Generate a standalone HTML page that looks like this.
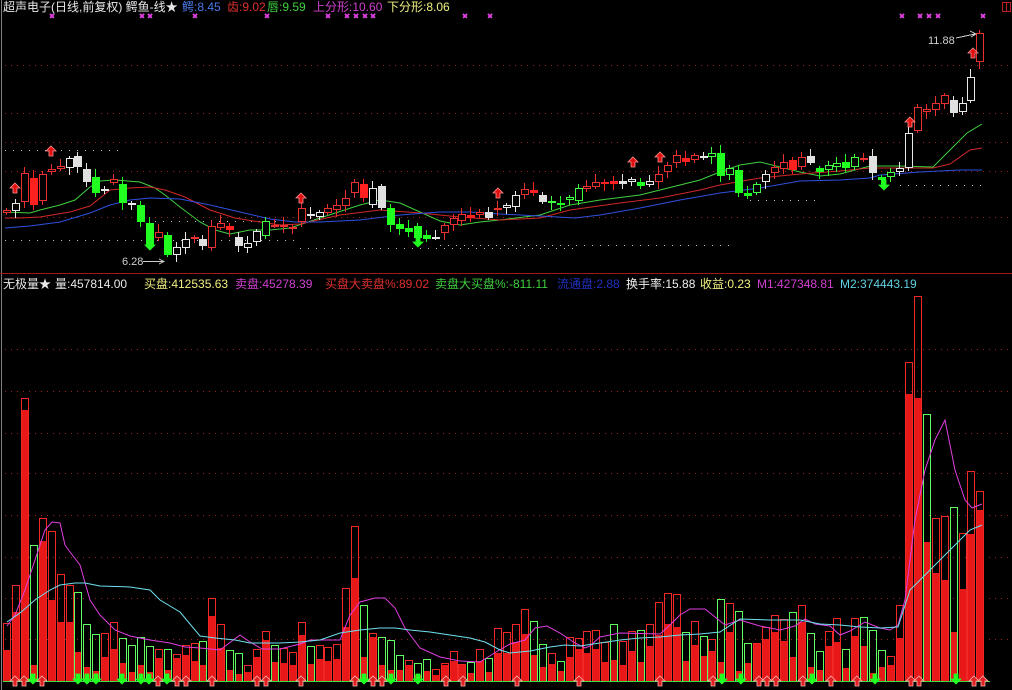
<!DOCTYPE html>
<html><head><meta charset="utf-8"><style>
html,body{margin:0;padding:0;background:#000;width:1012px;height:690px;overflow:hidden;position:relative}
svg{position:absolute;left:0;top:0}
.t{position:absolute;font-family:"Liberation Sans","Noto Sans CJK SC",sans-serif;font-size:12px;line-height:14px;white-space:nowrap}
</style></head><body>
<svg id="s" width="1012" height="690" xmlns="http://www.w3.org/2000/svg" shape-rendering="crispEdges">
<line x1="1.5" y1="0" x2="1.5" y2="690" stroke="#808080" stroke-width="1"/>
<line x1="0" y1="273.5" x2="1012" y2="273.5" stroke="#a01818" stroke-width="1"/>
<rect x="1002.5" y="2.5" width="8" height="9" fill="none" stroke="#c02020"/>
<line x1="1006.5" y1="2" x2="1006.5" y2="11" stroke="#c02020"/>
<g id="g"></g>
<text x="122" y="265" fill="#d0d0d0" font-family="Liberation Sans" font-size="11">6.28</text>
<line x1="143" y1="261.5" x2="163" y2="261.5" stroke="#d0d0d0"/>
<path d="M159 259 L164 261.5 L159 264" fill="none" stroke="#d0d0d0"/>
<text x="928" y="44" fill="#d0d0d0" font-family="Liberation Sans" font-size="11">11.88</text>
<path d="M956 38 L975 34 M970 31 L976 34 L971 37" fill="none" stroke="#d0d0d0"/>
</svg>
<div class="t" style="left:3px;top:0px;color:#e8e8e8">超声电子(日线,前复权) 鳄鱼-线★</div>
<div class="t" style="left:182px;top:0px;color:#4a78e8">鳄:8.45</div>
<div class="t" style="left:227px;top:0px;color:#e03030">齿:9.02</div>
<div class="t" style="left:267px;top:0px;color:#40d040">唇:9.59</div>
<div class="t" style="left:313px;top:0px;color:#d040d0">上分形:10.60</div>
<div class="t" style="left:387px;top:0px;color:#f0f080">下分形:8.06</div>

<div class="t" style="left:3px;top:277px;color:#e8e8e8">无极量★</div>
<div class="t" style="left:55px;top:277px;color:#e8e8e8">量:457814.00</div>
<div class="t" style="left:144px;top:277px;color:#f0f080">买盘:412535.63</div>
<div class="t" style="left:235px;top:277px;color:#d040d0">卖盘:45278.39</div>
<div class="t" style="left:325px;top:277px;color:#e03030">买盘大卖盘%:89.02</div>
<div class="t" style="left:435px;top:277px;color:#40d040">卖盘大买盘%:-811.11</div>
<div class="t" style="left:557px;top:277px;color:#2030c0">流通盘:2.88</div>
<div class="t" style="left:626px;top:277px;color:#f0f0f0">换手率:15.88</div>
<div class="t" style="left:700px;top:277px;color:#f0f080">收益:0.23</div>
<div class="t" style="left:757px;top:277px;color:#d040d0">M1:427348.81</div>
<div class="t" style="left:840px;top:277px;color:#60d0e0">M2:374443.19</div>
<script>
(function(){
var g=document.getElementById('g'),h='';
var SP=8.93;function L(i){return 3+i*SP;}
[65,113,142,171,217].forEach(function(y){h+='<line x1="5" y1="'+(y+.5)+'" x2="1012" y2="'+(y+.5)+'" stroke="#a02020" stroke-dasharray="1,5"/>';});
[349,391,433,473,515,557,598,639].forEach(function(y){h+='<line x1="5" y1="'+(y+.5)+'" x2="1012" y2="'+(y+.5)+'" stroke="#a02020" stroke-dasharray="1,5"/>';});
[[5,125,150],[155,300,221],[5,300,240],[440,735,245],[300,580,248],[750,815,200],[900,985,185]].forEach(function(d){
h+='<line x1="'+d[0]+'" y1="'+(d[2]+.5)+'" x2="'+d[1]+'" y2="'+(d[2]+.5)+'" stroke="#c0c0c0" stroke-dasharray="1,7"/>';});
[52,142,150,195,267,328,347,356,365,373,465,490,902,920,929,938,983].forEach(function(x){
h+='<path d="M'+(x-2)+' 14L'+(x+2)+' 18M'+(x+2)+' 14L'+(x-2)+' 18" stroke="#e040e0" stroke-width="1.5"/>';});
function pl(pts,c){h+='<polyline shape-rendering="auto" fill="none" stroke="'+c+'" stroke-width="1" points="'+pts.map(function(p){return p.join(',')}).join(' ')+'"/>';}
pl([[5,212],[30,213],[40,210],[60,205],[75,200],[90,187],[100,181],[115,180],[140,182],[155,188],[165,195],[180,207],[200,222],[215,230],[230,234],[250,230],[270,230],[290,228],[320,218],[360,205],[380,200],[400,203],[420,212],[440,221],[460,225],[480,222],[500,220],[540,215],[570,205],[600,200],[640,195],[680,185],[700,180],[720,172],[740,165],[760,162],[780,167],[800,172],[820,176],[840,174],[870,166],[900,166],[933,167],[950,150],[967,133],[982,124]],'#40d040');
pl([[5,218],[20,218],[40,217],[70,212],[90,206],[110,190],[130,188],[150,187],[165,190],[185,197],[210,210],[235,218],[260,222],[280,225],[300,224],[340,215],[380,210],[420,213],[460,217],[500,220],[540,218],[570,210],[620,203],[660,198],[700,190],[720,185],[760,178],[800,174],[840,171],[870,168],[900,168],[933,168],[950,164],[970,150],[982,148]],'#d02828');
pl([[5,228],[30,226],[60,222],[90,213],[110,205],[130,200],[150,198],[180,199],[210,205],[240,212],[270,219],[295,222],[320,222],[360,220],[400,215],[440,212],[470,212],[500,214],[540,216],[575,218],[600,215],[640,208],[680,200],[720,193],[760,188],[800,181],[840,180],[870,178],[880,175],[920,172],[960,170],[982,170]],'#3050e0');
var C="r210213 w203211 r173202 R178205 r174201 r169172 r166169 w158168 W156167 W169182 G177193 w189191 r179183 G184203 w203204 G205222 G223245 r232238 G235255 w247255 w239248 r237238 W239246 r226248 r223228 R226230 W237246 w243248 w231242 g221236 r225226 r225226 r227228 r208222 w214215 w212217 r208213 r205210 r198206 r182193 R184198 w188205 W186208 G208225 G224229 G228232 G226238 G235239 w237238 r225233 r218225 r214221 R215218 r212215 W212218 r208209 w205208 w195207 r189195 R190193 W195202 g201203 G203205 g197200 g188201 r186189 r182187 R182184 R181184 W181184 w179182 G182186 w181185 r174182 r165172 r155163 R158162 r155160 w156158 g153157 G153176 g168175 G170193 G193196 g184193 w174182 r167173 r162169 R160170 r157167 W156163 G168172 g165170 g163167 G162168 g157167 r158160 W156173 G177180 g172177 w168172 w133168 r107131 r109112 r103110 r095104 W100113 w103112 w077101 r033062".split(' ');
var col={r:'#e83030',R:'#ff2020',w:'#e8e8e8',W:'#e0e0e0',g:'#40ff40',G:'#20ff20'};
C.forEach(function(s,i){
var t=s[0],a=+s.substr(1,3),b=+s.substr(4,3),x=Math.round(L(i)),c=col[t];
var wh=(i*37%7)+2,wl=(i*53%6)+2;
h+='<line x1="'+(x+3.5)+'" y1="'+(a-wh)+'" x2="'+(x+3.5)+'" y2="'+(b+wl)+'" stroke="'+c+'"/>';
if(b-a<2){h+='<rect x="'+x+'" y="'+a+'" width="8" height="2" fill="'+c+'"/>';}
else if(t==t.toUpperCase()){h+='<rect x="'+x+'" y="'+a+'" width="8" height="'+(b-a)+'" fill="'+c+'"/>';}
else{h+='<rect x="'+(x+.5)+'" y="'+(a+.5)+'" width="7" height="'+(b-a-1)+'" fill="#000" stroke="'+c+'"/>';}
});
function up(x,y,f,s){h+='<path shape-rendering="auto" d="M'+x+' '+y+'L'+(x+5)+' '+(y+5)+'L'+(x+2)+' '+(y+5)+'L'+(x+2)+' '+(y+10)+'L'+(x-2)+' '+(y+10)+'L'+(x-2)+' '+(y+5)+'L'+(x-5)+' '+(y+5)+'Z" fill="'+f+'" stroke="'+s+'" stroke-width="0.8"/>';}
function dn(x,y,f,s){h+='<path shape-rendering="auto" d="M'+x+' '+(y+10)+'L'+(x+5)+' '+(y+5)+'L'+(x+2)+' '+(y+5)+'L'+(x+2)+' '+y+'L'+(x-2)+' '+y+'L'+(x-2)+' '+(y+5)+'L'+(x-5)+' '+(y+5)+'Z" fill="'+f+'" stroke="'+s+'" stroke-width="0.8"/>';}
[[15,183],[51,146],[301,193],[498,188],[633,157],[660,152],[910,117],[973,48]].forEach(function(p){up(p[0],p[1],'#e01010','#ff9090');});
[[150,240],[418,237],[884,180]].forEach(function(p){dn(p[0],p[1],'#20ff20','#20ff20');});
var V="r623650 r585612 r398410 g545665 r518541 r531600 r574622 r585622 g592652 g624667 g634671 r633657 r622649 g638663 g645672 g637665 g646672 r649658 g649670 r654658 r645655 r643661 g641665 r598616 r624648 g650670 g653674 r665672 r649657 r631640 g645662 r648663 r652665 r622635 g646664 r645659 r647661 r644659 r588627 r526578 g605657 r633637 g637665 g640670 g655670 r660665 g663675 g659671 r669675 r663665 r651661 r664665 g662673 r649661 g658672 r628653 r632653 r624642 r609634 g621655 g644667 r653664 g661671 r637657 r638649 r631653 r630649 r642662 g624660 r641665 r631651 g630662 r624646 r602635 r593624 r594627 g632661 r621645 g636656 r639651 g599662 r603632 g611671 g643663 r643643 r627639 r615632 r619641 g612657 r605622 g633667 g651670 r631646 r618642 g649668 r618636 g617646 g630673 g650667 r656665 r605638 r362394 r296398 g414542 r518573 r516580 g507632 r533589 r471534 r491510".split(' ');
var B=681;
V.forEach(function(s,i){
var t=s[0],a=+s.substr(1,3),n=+s.substr(4,3),x=Math.round(L(i));
h+='<rect x="'+(x+1)+'" y="'+n+'" width="6" height="'+(B-n)+'" fill="#e81818"/>';
h+='<rect x="'+(x+.5)+'" y="'+(a+.5)+'" width="7" height="'+(B-a)+'" fill="none" stroke="'+(t=='r'?'#f02828':'#60ff60')+'"/>';
});
pl([[7,626],[15,615],[25,590],[35,560],[45,530],[52,522],[60,523],[65,545],[70,552],[80,565],[90,600],[100,615],[115,630],[130,636],[150,640],[170,643],[185,647],[200,648],[220,650],[240,635],[250,642],[262,649],[280,649],[300,644],[310,640],[340,640],[350,615],[360,602],[375,598],[385,598],[395,608],[405,628],[420,648],[440,657],[460,661],[480,662],[496,652],[510,644],[525,640],[535,628],[547,626],[560,633],[575,643],[585,648],[590,646],[600,637],[620,633],[660,634],[670,625],[680,615],[690,609],[705,609],[715,617],[725,625],[740,620],[760,626],[780,630],[795,626],[805,619],[815,624],[830,626],[840,635],[850,631],[865,622],[880,628],[890,630],[898,625],[905,600],[915,520],[925,470],[935,440],[945,420],[955,470],[965,500],[972,508],[982,504]],'#e040e0');
pl([[7,622],[20,613],[35,600],[50,590],[60,585],[75,583],[85,583],[100,586],[130,587],[150,590],[160,600],[180,612],[200,636],[215,638],[235,640],[250,643],[280,643],[300,642],[320,640],[340,633],[360,630],[380,628],[395,628],[410,630],[430,632],[450,635],[470,638],[485,642],[500,650],[510,653],[530,651],[550,647],[565,645],[580,646],[600,643],[620,640],[640,638],[660,637],[680,635],[700,634],[720,632],[740,619],[770,620],[800,620],[820,624],[840,625],[860,627],[880,628],[898,627],[910,590],[925,575],[940,560],[955,545],[970,530],[982,525]],'#70e0f0');
h+='<line x1="3" y1="681.5" x2="990" y2="681.5" stroke="#40e040"/>';
[15,24,42,158,177,186,212,257,266,301,355,373,382,446,463,517,579,660,713,759,767,776,803,831,857,911,919,974,983].forEach(function(x){up(x,676,'#e02020','#ffb0b0');});
[33,78,87,96,122,141,149,167,364,391,418,722,741,812,875,956].forEach(function(x){dn(x,674,'#20ff20','#20ff20');});
g.innerHTML=h;
})();
</script>
</body></html>
